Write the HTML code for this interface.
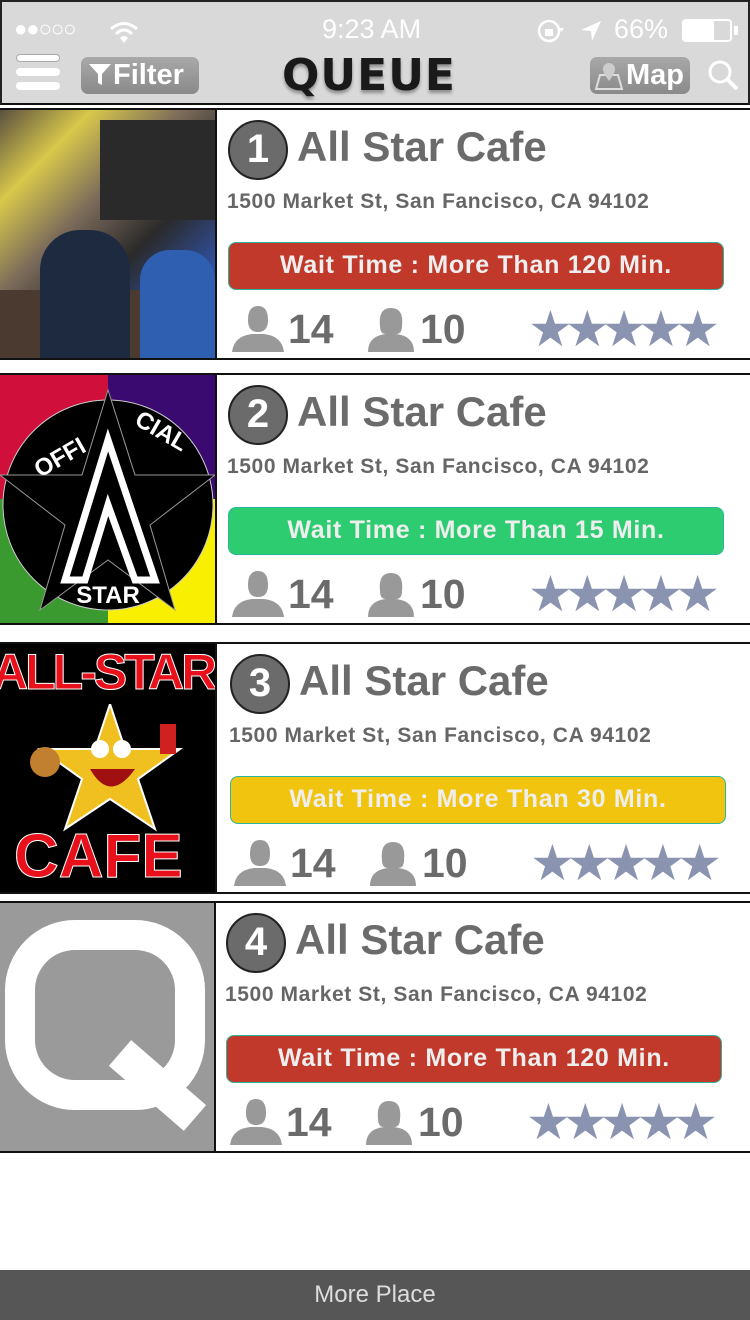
<!DOCTYPE html>
<html><head><meta charset="utf-8"><style>
*{margin:0;padding:0;box-sizing:border-box}
body{width:750px;height:1320px;background:#fff;position:relative;overflow:hidden;font-family:"Liberation Sans",sans-serif}
.hdr{position:absolute;left:0;top:0;width:750px;height:105px;background:#d9d9d9;border:2px solid #222;border-bottom:2px solid #111}
.st{position:absolute;color:#fff;font-size:27px;top:12px}
.btn{position:absolute;top:55px;height:37px;border-radius:7px;background:linear-gradient(#a8a8a8,#8a8a8a);color:#fff;font-size:29px;font-weight:bold;line-height:37px;white-space:nowrap}
.logo{position:absolute;left:280px;top:48px;font-size:44px;font-weight:bold;letter-spacing:1px;color:#1a1a1a;transform:scaleX(1.0);transform-origin:left;font-family:"DejaVu Sans",sans-serif;text-shadow:0 3px 3px rgba(0,0,0,.35);white-space:nowrap}
.card{position:absolute;left:0;width:750px;height:252px;border-top:2px solid #111;border-bottom:2px solid #111}
.img{position:absolute;left:0;top:0;width:217px;height:248px;border-right:2px solid #111;overflow:hidden}
.num{position:absolute;left:228px;top:10px;width:60px;height:60px;border-radius:50%;background:#6b6b6b;border:2px solid #222;color:#fff;font-size:40px;font-weight:bold;text-align:center;line-height:55px}
.ttl{position:absolute;left:297px;top:13px;font-size:42px;font-weight:bold;color:#6b6b6b;white-space:nowrap}
.adr{position:absolute;left:227px;top:80px;font-size:21px;font-weight:bold;color:#666;white-space:nowrap;letter-spacing:0.6px}
.wt{position:absolute;left:228px;top:132px;width:496px;height:48px;border-radius:8px;border:1.5px solid #2bb59a;color:#eee;font-size:25px;font-weight:bold;text-align:center;line-height:45px;white-space:nowrap;letter-spacing:0.7px}
.row{position:absolute;left:230px;top:196px;height:50px;width:500px}
.cnt{position:absolute;top:0px;font-size:41px;font-weight:bold;color:#6b6b6b}
.stars{position:absolute;left:298px;top:0px;color:#8a94b0;font-size:50px;letter-spacing:-8px;line-height:46px;white-space:nowrap}
.foot{position:absolute;left:0;top:1270px;width:750px;height:50px;background:#565656;color:#ddd;font-size:24px;text-align:center;line-height:50px}
</style></head><body>
<div class="hdr">
 <div class="st" style="left:12px;top:14px;font-size:22px;letter-spacing:-1px">●●○○○</div>
 <svg style="position:absolute;left:107px;top:18px" width="30" height="24" viewBox="0 0 30 24"><path d="M2 9 Q15 -2 28 9" stroke="#fff" stroke-width="3" fill="none"/><path d="M7 14 Q15 6 23 14" stroke="#fff" stroke-width="3" fill="none"/><path d="M11 18 L15 23 L19 18 Q15 14 11 18Z" fill="#fff"/></svg>
 <div class="st" style="left:320px">9:23 AM</div>
 <svg style="position:absolute;left:535px;top:16px" width="28" height="26" viewBox="0 0 28 26"><circle cx="12" cy="13" r="10" stroke="#fff" stroke-width="2.5" fill="none"/><rect x="8" y="11" width="8" height="7" fill="#fff"/><path d="M22 10 L27 10 L24.5 14Z" fill="#fff"/></svg>
 <svg style="position:absolute;left:577px;top:17px" width="24" height="24" viewBox="0 0 24 24"><path d="M22 2 L2 11 L12 12 L13 22Z" fill="#fff"/></svg>
 <div class="st" style="left:612px">66%</div>
 <div style="position:absolute;left:680px;top:17px;width:50px;height:23px;border:2px solid #fff;border-radius:4px"><div style="width:30px;height:100%;background:#fff"></div></div>
 <div style="position:absolute;left:732px;top:24px;width:4px;height:9px;background:#fff"></div>
 <div style="position:absolute;left:14px;top:52px;width:44px;height:8px;background:#fff;border-radius:4px;box-shadow:0 14px 0 #fff,0 28px 0 #fff;border:1px solid #aaa"></div>
 <div class="btn" style="left:79px;width:118px;padding-left:6px"><svg width="26" height="26" viewBox="0 0 26 26" style="vertical-align:-3px"><path d="M2 3 L24 3 L15 13 L15 24 L11 22 L11 13Z" fill="#fff"/></svg>Filter</div>
 <div class="logo">QUEUE</div>
 <div class="btn" style="left:588px;width:100px;padding-left:36px"><svg style="position:absolute;left:4px;top:4px" width="30" height="30" viewBox="0 0 30 30"><path d="M2 28 L6 14 L24 14 L28 28Z" fill="none" stroke="#ddd" stroke-width="2"/><path d="M15 2 A6 6 0 0 1 21 8 Q21 12 15 20 Q9 12 9 8 A6 6 0 0 1 15 2Z" fill="#ccc"/></svg>Map</div>
 <svg style="position:absolute;left:704px;top:56px" width="34" height="34" viewBox="0 0 34 34"><circle cx="14" cy="14" r="10" stroke="#fff" stroke-width="3" fill="none"/><path d="M21 21 L31 31" stroke="#fff" stroke-width="4"/></svg>
</div>

<!-- card1 -->
<div class="card" style="top:108px">
 <div class="img" style="background:linear-gradient(135deg,#5a5040 0%,#d8c84a 20%,#7a6a5a 40%,#2a2a2a 60%,#3050a0 80%,#1a1a1a 100%)">
  <div style="position:absolute;left:100px;top:10px;width:117px;height:100px;background:#2a2a2a"></div>
  <div style="position:absolute;left:0;top:180px;width:217px;height:70px;background:#4a3a30"></div>
  <div style="position:absolute;left:140px;top:140px;width:75px;height:110px;background:#2f5fb0;border-radius:30px 30px 0 0"></div>
  <div style="position:absolute;left:40px;top:120px;width:90px;height:130px;background:#1e2a40;border-radius:40px 40px 0 0"></div>
 </div>
 <div class="num">1</div><div class="ttl">All Star Cafe</div>
 <div class="adr">1500 Market St, San Fancisco, CA 94102</div>
 <div class="wt" style="background:#c0392b">Wait Time : More Than 120 Min.</div>
 <div class="row"><svg width="56" height="48" viewBox="0 0 56 48"><path d="M18 14 Q18 0 28 0 Q38 0 38 14 Q38 26 28 26 Q18 26 18 14Z" fill="#999"/><path d="M2 46 Q4 30 22 28 L34 28 Q52 30 54 46Z" fill="#999"/></svg><div class="cnt" style="left:58px">14</div>
 <svg style="position:absolute;left:136px;top:0" width="50" height="48" viewBox="0 0 50 48"><path d="M14 20 Q12 2 25 2 Q38 2 36 20 Q36 28 30 28 Q48 30 48 46 L2 46 Q2 30 20 28 Q14 28 14 20Z" fill="#999"/></svg><div class="cnt" style="left:190px">10</div>
 <div class="stars">★★★★★</div></div>
</div>

<!-- card2 -->
<div class="card" style="top:373px">
 <div class="img">
  <div style="position:absolute;left:0;top:0;width:108px;height:124px;background:#d0103a"></div>
  <div style="position:absolute;left:108px;top:0;width:109px;height:124px;background:#3a0a70"></div>
  <div style="position:absolute;left:0;top:124px;width:108px;height:124px;background:#3a9a30"></div>
  <div style="position:absolute;left:108px;top:124px;width:109px;height:124px;background:#f8f000"></div>
  <svg style="position:absolute;left:0;top:0" width="217" height="248" viewBox="0 0 217 248"><circle cx="108" cy="130" r="105" fill="#000" stroke="#ccc" stroke-width="1"/><polygon points="108,15 135,100 215,100 150,150 175,235 108,185 40,235 65,150 0,100 82,100" fill="#000" stroke="#999"/><path d="M108 65 L65 205 L85 205 L108 130 L135 205 L155 205Z" fill="none" stroke="#fff" stroke-width="7"/>
  <text x="108" y="228" fill="#fff" font-size="24" font-weight="bold" text-anchor="middle" font-family="Liberation Sans">STAR</text>
  <text x="30" y="95" fill="#fff" font-size="24" font-weight="bold" font-family="Liberation Sans" transform="rotate(-30 50 80)">OFFI</text>
  <text x="125" y="60" fill="#fff" font-size="24" font-weight="bold" font-family="Liberation Sans" transform="rotate(30 150 70)">CIAL</text></svg>
 </div>
 <div class="num">2</div><div class="ttl">All Star Cafe</div>
 <div class="adr">1500 Market St, San Fancisco, CA 94102</div>
 <div class="wt" style="background:#2ecc71">Wait Time : More Than 15 Min.</div>
 <div class="row"><svg width="56" height="48" viewBox="0 0 56 48"><path d="M18 14 Q18 0 28 0 Q38 0 38 14 Q38 26 28 26 Q18 26 18 14Z" fill="#999"/><path d="M2 46 Q4 30 22 28 L34 28 Q52 30 54 46Z" fill="#999"/></svg><div class="cnt" style="left:58px">14</div>
 <svg style="position:absolute;left:136px;top:0" width="50" height="48" viewBox="0 0 50 48"><path d="M14 20 Q12 2 25 2 Q38 2 36 20 Q36 28 30 28 Q48 30 48 46 L2 46 Q2 30 20 28 Q14 28 14 20Z" fill="#999"/></svg><div class="cnt" style="left:190px">10</div>
 <div class="stars">★★★★★</div></div>
</div>

<!-- card3 -->
<div class="card" style="top:642px">
 <div class="img" style="background:#000">
  <div style="position:absolute;left:-8px;top:0px;font-size:50px;font-weight:bold;color:#e8101a;letter-spacing:-3px;-webkit-text-stroke:1px #fff;white-space:nowrap;line-height:56px">ALL-STAR</div>
  <svg style="position:absolute;left:30px;top:60px" width="170" height="130" viewBox="0 0 170 130"><polygon points="80,0 95,45 150,45 108,75 125,125 80,95 35,125 52,75 10,45 65,45" fill="#f0c020" stroke="#fff" stroke-width="2"/><circle cx="70" cy="45" r="9" fill="#fff"/><circle cx="92" cy="45" r="9" fill="#fff"/><path d="M60 65 Q80 100 105 65Z" fill="#a01010"/><circle cx="15" cy="58" r="15" fill="#c08030"/><rect x="130" y="20" width="16" height="30" fill="#d02020"/></svg>
  <div style="position:absolute;left:14px;top:178px;font-size:62px;font-weight:bold;color:#e8101a;-webkit-text-stroke:1px #fff;line-height:70px">CAFE</div>
 </div>
 <div class="num" style="left:230px">3</div><div class="ttl" style="left:299px">All Star Cafe</div>
 <div class="adr" style="left:229px">1500 Market St, San Fancisco, CA 94102</div>
 <div class="wt" style="background:#f1c40f;left:230px">Wait Time : More Than 30 Min.</div>
 <div class="row" style="left:232px"><svg width="56" height="48" viewBox="0 0 56 48"><path d="M18 14 Q18 0 28 0 Q38 0 38 14 Q38 26 28 26 Q18 26 18 14Z" fill="#999"/><path d="M2 46 Q4 30 22 28 L34 28 Q52 30 54 46Z" fill="#999"/></svg><div class="cnt" style="left:58px">14</div>
 <svg style="position:absolute;left:136px;top:0" width="50" height="48" viewBox="0 0 50 48"><path d="M14 20 Q12 2 25 2 Q38 2 36 20 Q36 28 30 28 Q48 30 48 46 L2 46 Q2 30 20 28 Q14 28 14 20Z" fill="#999"/></svg><div class="cnt" style="left:190px">10</div>
 <div class="stars">★★★★★</div></div>
</div>

<!-- card4 -->
<div class="card" style="top:901px">
 <div class="img" style="background:#9a9a9a;width:216px">
  <svg style="position:absolute;left:0;top:0" width="216" height="248" viewBox="0 0 216 248"><rect x="20" y="32" width="170" height="160" rx="55" fill="none" stroke="#fff" stroke-width="30"/><path d="M120 150 L195 215" stroke="#fff" stroke-width="34"/></svg>
 </div>
 <div class="num" style="left:226px">4</div><div class="ttl" style="left:295px">All Star Cafe</div>
 <div class="adr" style="left:225px">1500 Market St, San Fancisco, CA 94102</div>
 <div class="wt" style="background:#c0392b;left:226px">Wait Time : More Than 120 Min.</div>
 <div class="row" style="left:228px"><svg width="56" height="48" viewBox="0 0 56 48"><path d="M18 14 Q18 0 28 0 Q38 0 38 14 Q38 26 28 26 Q18 26 18 14Z" fill="#999"/><path d="M2 46 Q4 30 22 28 L34 28 Q52 30 54 46Z" fill="#999"/></svg><div class="cnt" style="left:58px">14</div>
 <svg style="position:absolute;left:136px;top:0" width="50" height="48" viewBox="0 0 50 48"><path d="M14 20 Q12 2 25 2 Q38 2 36 20 Q36 28 30 28 Q48 30 48 46 L2 46 Q2 30 20 28 Q14 28 14 20Z" fill="#999"/></svg><div class="cnt" style="left:190px">10</div>
 <div class="stars">★★★★★</div></div>
</div>

<div class="foot">More Place</div>
</body></html>
